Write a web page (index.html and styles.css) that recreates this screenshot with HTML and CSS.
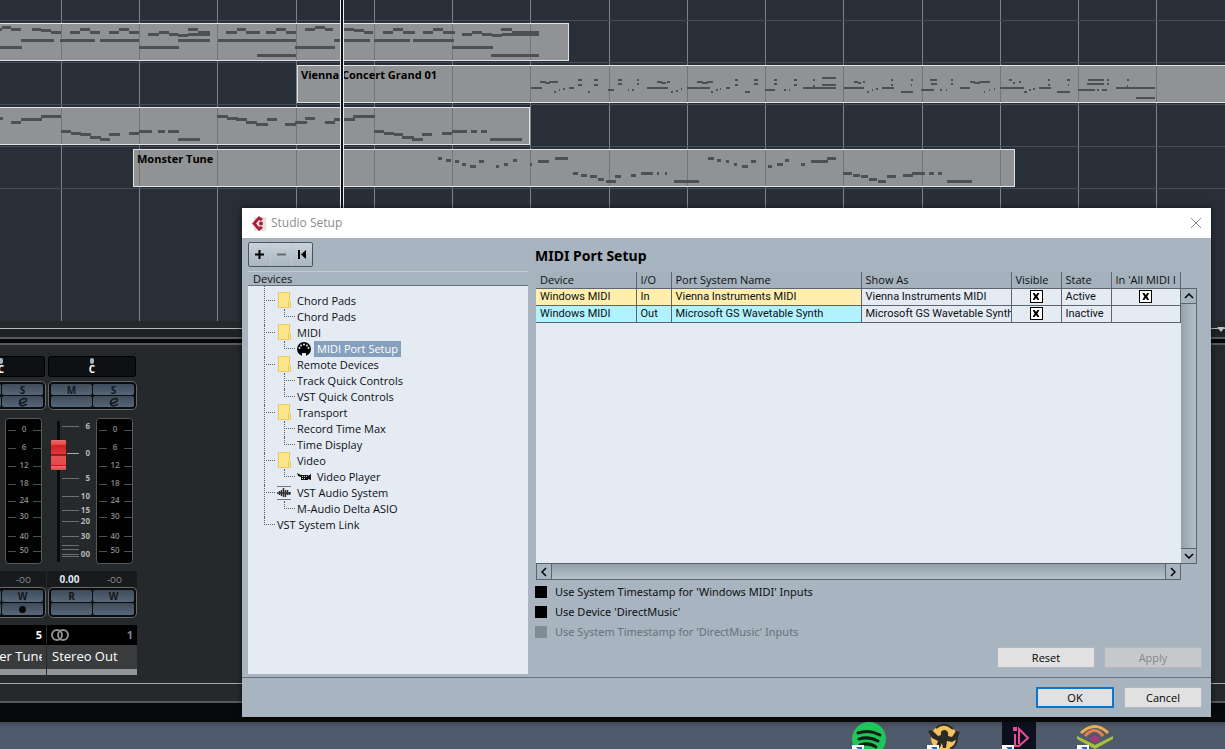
FILE: index.html
```html
<!DOCTYPE html>
<html lang="en">
<head>
  <meta charset="UTF-8" />
  <meta name="viewport" content="width=device-width, initial-scale=1.0" />
  <title>Studio Setup</title>
  <link rel="stylesheet" href="styles.css">
</head>
<body>
  <!-- shared shapes -->
  <svg class="defs" aria-hidden="true">
    <symbol id="bars" viewBox="0 0 1225 400">
      <path d="M61.5 0v400M139.5 0v400M217.5 0v400M296.5 0v400M374.5 0v400M452.5 0v400M530.5 0v400M609.5 0v400M687.5 0v400M765.5 0v400M843.5 0v400M922.5 0v400M1000.5 0v400M1078.5 0v400M1156.5 0v400" stroke="currentColor" fill="none" />
    </symbol>
    <symbol id="folder" viewBox="0 0 14 16">
      <path d="M1.5.5h11v9l1 1v5h-12z" fill="#fde68a" stroke="#e9c75a" />
      <path d="M11.5 15v-5h1" fill="none" stroke="#e9c75a" />
    </symbol>
    <symbol id="edit" viewBox="0 0 12 10">
      <path d="M2 6.500C5 6.500 9.500 5 9.500 3C9.500 1.200 7 1 5 2.200C2.500 3.600 1.800 6 3 7.800C4.300 9.300 7.500 9 9.800 7" fill="none" stroke="#101418" stroke-width="1.500" />
    </symbol>
    <symbol id="shortcut" viewBox="0 0 12 12">
      <path d="M0 0h12v12H0z" fill="#fff" />
      <path d="M4 2h6v6L8 6 4 11 2 9l4-5z" fill="#2b5fb4" />
    </symbol>
  </svg>

  <section class="arranger">
    <svg class="grid" width="1225" height="400"><use href="#bars" /></svg>
    <div class="lane lane-top"></div>
    <div class="lane">
      <div class="clip clip-a">
        <svg class="notes" width="1225" height="36" viewBox="0 24 1225 36">
          <use class="bar-lines" href="#bars" width="1225" height="400" />
          <path transform="translate(0 .5)" d="M2 27h9M0 29h2M11 29h10M32 29h9M41 30h10M51 32h10M70 32h10M80 29h10M90 32h10M109 32h10M119 29h10M129 32h10M148 34h11M159 32h10M169 34h9M178 35h10M188 29h10M188 34h22M198 32h12M226 32h11M237 29h9M246 32h14M266 32h10M276 29h10M286 32h10M305 29h10M315 27h10M325 29h8M344 29h10M354 30h10M364 32h9M383 32h10M393 29h10M403 32h12M423 32h10M433 29h10M443 32h12M462 34h10M472 32h10M482 34h10M492 35h10M501 29h11M502 34h37M512 32h27M21 40h33M60 40h35M100 40h39M178 40h32M218 40h78M334 40h36M374 40h36M413 40h41M0 47h22M139 47h40M295 47h40M452 47h41M257 55h39M491 55h48" />
        </svg>
      </div>
    </div>
    <div class="lane">
      <div class="clip clip-b">
        <svg class="notes thin" width="928" height="36" viewBox="298 66 928 36">
          <use class="bar-lines" href="#bars" width="1225" height="400" />
          <path d="M531 88h11M540 82h6M545 83h5M549 82h9M554 92h2M559 90h1M563 89h2M569 88h5M578 80h4M578 85h4M588 92h2M594 80h4M594 85h4M608 90h6M618 80h4M618 84h4M628 90h1M632 90h2M637 80h2M637 84h2M647 88h21M657 82h5M661 83h5M667 82h3M671 92h2M676 91h2M681 89h1M687 88h23M697 82h6M702 83h6M707 82h6M711 92h2M716 90h2M720 89h1M726 88h4M735 80h3M735 85h3M745 92h5M754 80h4M754 84h4M765 90h10M774 80h3M774 84h3M784 90h2M789 90h1M794 80h3M794 85h3M803 88h33M813 80h2M813 86h2M822 78h14M822 85h14M844 88h20M854 82h4M858 83h3M863 82h2M867 92h2M872 90h1M876 89h2M882 88h12M891 80h2M891 85h2M901 92h12M911 80h2M911 85h1M921 90h13M930 80h7M931 84h6M940 90h2M946 90h1M951 80h2M951 84h2M960 88h10M970 82h5M974 83h6M979 82h11M984 92h1M989 90h1M994 89h1M1000 88h24M1009 80h3M1013 83h2M1019 82h2M1024 92h3M1029 90h2M1033 89h2M1039 88h12M1048 80h2M1048 85h2M1057 92h13M1067 80h3M1068 85h1M1078 90h17M1088 80h16M1087 84h17M1097 90h2M1102 90h5M1107 80h2M1107 84h2M1116 88h39M1127 80h2M1127 86h1M1136 98h19" />
        </svg>
        <span class="clip-name">Vienna Concert Grand 01</span>
      </div>
    </div>
    <div class="lane">
      <div class="clip clip-c">
        <svg class="notes" width="1225" height="36" viewBox="0 108 1225 36">
          <use class="bar-lines" href="#bars" width="1225" height="400" />
          <path transform="translate(0 .5)" d="M0 118h3M11 122h10M21 119h21M41 116h20M61 131h10M71 133h10M80 134h11M90 137h11M100 139h10M109 134h11M129 133h10M139 131h13M158 131h7M168 131h11M178 139h22M217 116h11M227 118h11M236 119h11M246 122h11M256 124h12M267 119h10M285 124h11M295 122h12M305 118h10M325 122h10M334 119h21M353 116h22M374 131h10M384 133h10M394 134h9M402 137h12M412 139h11M422 134h10M442 133h10M452 131h15M471 131h6M481 131h6M490 139h32" />
        </svg>
      </div>
    </div>
    <div class="lane">
      <div class="clip clip-d">
        <svg class="notes" width="1225" height="36" viewBox="134 150 1225 36">
          <use class="bar-lines" href="#bars" width="1225" height="400" />
          <path transform="translate(0 .5)" d="M438 158h4M446 160h5M455 161h4M462 164h4M470 166h6M479 161h5M496 166h3M504 164h4M513 160h4M530 164h2M538 161h11M555 158h13M573 173h5M581 175h6M590 176h7M598 179h6M606 181h10M615 176h6M631 175h5M641 173h12M657 173h2M665 173h2M674 181h25M708 158h6M717 160h4M726 161h3M734 164h3M742 166h6M751 161h5M768 166h4M777 164h6M785 160h4M801 164h4M811 161h17M827 158h9M843 173h9M853 175h7M861 176h7M869 179h8M878 181h8M887 176h9M903 175h10M912 173h13M929 173h5M938 173h4M947 181h25" />
        </svg>
        <span class="clip-name">Monster Tune</span>
      </div>
    </div>
    <div class="lane"></div>
    <div class="playhead"></div>
  </section>

  <div class="arranger-edge"><svg width="8" height="5"><path d="M0 0h8L4 5z" fill="#b9bdc1" /></svg></div>
  <div class="divider"></div>

  <section class="mixer">
    <div class="strip">
      <div class="pan"><i></i>C</div>
      <div class="btn-grid">
        <button aria-label="Mute"></button><button>S</button>
        <button aria-label="Inserts"></button><button aria-label="Edit"><svg width="12" height="10"><use href="#edit" /></svg></button>
      </div>
      <svg class="fader" width="90" height="147" viewBox="0 0 90 147">
        <rect class="meter" x="49.500" y=".5" width="36" height="145" rx="3" />
        <path class="meter-ticks" d="M52 12.500h8M77 12.500h8M52 30.500h8M77 30.500h8M52 48.500h8M77 48.500h8M52 66.500h8M77 66.500h8M52 83.500h8M77 83.500h8M52 99.500h8M77 99.500h8M52 118.500h8M77 118.500h8M52 133.500h8M77 133.500h8" />
        <g class="meter-text">
          <text x="68" y="14">0</text><text x="68" y="32">6</text><text x="68" y="50">12</text><text x="68" y="68">18</text><text x="68" y="85">24</text><text x="68" y="101">30</text><text x="68" y="121">40</text><text x="68" y="135">50</text>
        </g>
      </svg>
      <div class="readout"><b></b><span>-oo</span></div>
      <div class="btn-grid auto">
        <button aria-label="Read"></button><button>W</button>
        <button aria-label="Monitor"></button><button aria-label="Record"><i class="rec"></i></button>
      </div>
      <div class="number"><span></span><b class="on">5</b></div>
      <div class="name"><span>Monster Tune</span></div>
      <div class="color"></div>
    </div>

    <div class="strip">
      <div class="pan"><i></i>C</div>
      <div class="btn-grid">
        <button>M</button><button>S</button>
        <button aria-label="Inserts"></button><button aria-label="Edit"><svg width="12" height="10"><use href="#edit" /></svg></button>
      </div>
      <svg class="fader" width="90" height="147" viewBox="0 0 90 147">
        <defs>
          <linearGradient id="cap" x1="0" y1="0" x2="0" y2="1">
            <stop offset="0" stop-color="#f06a6a" /><stop offset=".15" stop-color="#e24a4a" /><stop offset=".16" stop-color="#d01f24" />
            <stop offset=".46" stop-color="#e0383a" /><stop offset=".5" stop-color="#4a0a0c" /><stop offset=".54" stop-color="#e85052" />
            <stop offset=".82" stop-color="#e4494b" /><stop offset=".85" stop-color="#b02024" /><stop offset=".88" stop-color="#ee6a6c" /><stop offset="1" stop-color="#d84548" />
          </linearGradient>
        </defs>
        <path d="M11.500 3v141" stroke="#0a0b0c" stroke-width="3" />
        <path class="scale" d="M15 8.500h17M15 60.500h17M15 78.500h17M15 92.500h17M15 103.500h17M15 118.500h17M15 127.500h17M15 131.500h17M15 136.500h17M15 138.500h17" />
        <path d="M20 35.500h12" stroke="#a9abad" />
        <g class="scale-text">
          <text x="43" y="11">6</text><text x="43" y="38">0</text><text x="43" y="63">5</text><text x="43" y="81">10</text><text x="43" y="95">15</text><text x="43" y="106">20</text><text x="43" y="121">30</text><text x="43" y="139">00</text>
        </g>
        <rect x="4" y="22" width="15" height="30" rx="1" fill="url(#cap)" />
        <rect class="meter" x="49.500" y=".5" width="36" height="145" rx="3" />
        <path class="meter-ticks" d="M52 12.500h8M77 12.500h8M52 30.500h8M77 30.500h8M52 48.500h8M77 48.500h8M52 66.500h8M77 66.500h8M52 83.500h8M77 83.500h8M52 99.500h8M77 99.500h8M52 118.500h8M77 118.500h8M52 133.500h8M77 133.500h8" />
        <g class="meter-text">
          <text x="68" y="14">0</text><text x="68" y="32">6</text><text x="68" y="50">12</text><text x="68" y="68">18</text><text x="68" y="85">24</text><text x="68" y="101">30</text><text x="68" y="121">40</text><text x="68" y="135">50</text>
        </g>
      </svg>
      <div class="readout"><b>0.00</b><span>-oo</span></div>
      <div class="btn-grid auto">
        <button>R</button><button>W</button>
        <button aria-label="Monitor"></button><button aria-label="Record"></button>
      </div>
      <div class="number">
        <svg width="20" height="14"><g fill="none" stroke="#8d8f91" stroke-width="2"><circle cx="7" cy="7" r="5" /><circle cx="13" cy="7" r="5" /></g></svg>
        <b>1</b>
      </div>
      <div class="name"><span>Stereo Out</span></div>
      <div class="color"></div>
    </div>
  </section>

  <div class="status"></div>
  <div class="black-bar"></div>

  <footer class="desktop">
    <div class="app">
      <svg width="34" height="34"><circle cx="17" cy="17" r="17" fill="#1fc65b" /><path d="M6 11q11-4 22 2M7 17q10-3 19 2M8 23q9-3 16 2" fill="none" stroke="#0b1f12" stroke-width="3" stroke-linecap="round" /></svg>
      <svg class="shortcut" width="12" height="12"><use href="#shortcut" /></svg>
    </div>
    <div class="app">
      <svg width="34" height="34">
        <circle cx="17" cy="16" r="13" fill="#f3c25e" />
        <path d="M9 6q8-7 17 1M30 16q0 8-7 11" fill="none" stroke="#2c2a28" stroke-width="2" />
        <path d="M1 9q3-2 6 1l4 4 3-1q-1-5 4-5 4 1 3 6l4 1 4-6 4 1-3 7-5 3-5-1-1 7h-3l-1-5-3 6H8l3-8-6-3z" fill="#2c2a28" />
      </svg>
      <svg class="shortcut" width="12" height="12"><use href="#shortcut" /></svg>
    </div>
    <div class="app">
      <svg width="34" height="34"><path d="M0 0h34v34H0z" fill="#0c101c" /><path d="M13 12v12h4l9-8-9-9v15" fill="none" stroke="#ec4a94" stroke-width="2" /><path d="M11 5h4v4h-4z" fill="#ec4a94" /></svg>
      <svg class="shortcut" width="12" height="12"><use href="#shortcut" /></svg>
    </div>
    <div class="app">
      <svg width="36" height="34"><path d="M0 14l18 9 18-9v3L18 27 0 17z" fill="#a9c03c" /><path d="M4 11Q18-2 31 11" fill="none" stroke="#e9b24c" stroke-width="3" /><path d="M8 14Q18 3 26 14" fill="none" stroke="#ec7f4e" stroke-width="3" /><path d="M12 17q6-7 11 1l-5 3z" fill="#a23a78" /></svg>
      <svg class="shortcut" width="12" height="12"><use href="#shortcut" /></svg>
    </div>
  </footer>

  <div class="dialog" role="dialog" aria-labelledby="dialog-title">
    <header class="titlebar">
      <svg width="14" height="15"><path d="M2 1h12v14H2z" fill="#e6e2e2" /><path d="M7 0l4 3-2 2-2-1-3 3.500 3 3.500 2-1 2 2-4 3-7-7.500z" fill="#b01c38" /><circle cx="9" cy="7.500" r="2" fill="#b01c38" /></svg>
      <span id="dialog-title">Studio Setup</span>
      <button class="close" aria-label="Close"><svg width="12" height="12"><path d="M1 1l10 10M11 1L1 11" stroke="#8a8a8a" /></svg></button>
    </header>

    <div class="panes">
      <aside class="devices">
        <div class="toolbar">
          <button aria-label="Add"><svg width="9" height="9"><path d="M4.500 0v9M0 4.500h9" stroke="#000" stroke-width="2" /></svg></button>
          <button aria-label="Remove"><svg width="9" height="9"><path d="M0 4.500h9" stroke="#666b70" stroke-width="2" /></svg></button>
          <button aria-label="Reset device"><svg width="9" height="9"><path d="M1 0v9" stroke="#000" stroke-width="2" /><path d="M8 0v9L3 4.500z" /></svg></button>
        </div>
        <h3>Devices</h3>
        <div class="tree-box">
          <ul class="tree">
            <li><div class="item"><svg class="folder" width="14" height="16"><use href="#folder" /></svg>Chord Pads</div>
              <ul><li><div class="item">Chord Pads</div></li></ul>
            </li>
            <li><div class="item"><svg class="folder" width="14" height="16"><use href="#folder" /></svg>MIDI</div>
              <ul><li><div class="item"><svg width="14" height="14"><circle cx="7" cy="7" r="7" /><path d="M5 11h4v3H5z" fill="#e4ebf3" /><g fill="#e4ebf3"><circle cx="2.500" cy="6" r="1" /><circle cx="4" cy="3.500" r="1" /><circle cx="7" cy="2.500" r="1" /><circle cx="10" cy="3.500" r="1" /><circle cx="11.500" cy="6" r="1" /></g></svg><span class="selected">MIDI Port Setup</span></div></li></ul>
            </li>
            <li><div class="item"><svg class="folder" width="14" height="16"><use href="#folder" /></svg>Remote Devices</div>
              <ul><li><div class="item">Track Quick Controls</div></li><li><div class="item">VST Quick Controls</div></li></ul>
            </li>
            <li><div class="item"><svg class="folder" width="14" height="16"><use href="#folder" /></svg>Transport</div>
              <ul><li><div class="item">Record Time Max</div></li><li><div class="item">Time Display</div></li></ul>
            </li>
            <li><div class="item"><svg class="folder" width="14" height="16"><use href="#folder" /></svg>Video</div>
              <ul><li><div class="item"><svg width="14" height="8"><path d="M0 0l4 2h7v1l3-2v6l-3-1v1H4V4L1 3z" fill="#111" /><path d="M5 3.500h5M5 5.500h4" stroke="#cfd6dd" stroke-dasharray="1 1" /></svg>Video Player</div></li></ul>
            </li>
            <li><div class="item"><svg width="14" height="14"><path d="M0 .5h14M0 13.500h14" stroke="#777" /><path d="M0 7h14M2.500 5v4M4.500 4v6M6.500 2v9M8.500 4v7M10.500 4v5M12.500 6v3" stroke="#333" stroke-width="1.500" /></svg>VST Audio System</div>
              <ul><li><div class="item">M-Audio Delta ASIO</div></li></ul>
            </li>
            <li><div class="item">VST System Link</div></li>
          </ul>
        </div>
      </aside>

      <main class="setup">
        <h2>MIDI Port Setup</h2>
        <div class="ports">
          <div class="ports-table">
            <table>
              <colgroup><col class="c-device"><col class="c-io"><col class="c-port"><col class="c-show"><col class="c-flag"><col class="c-flag"><col></colgroup>
              <thead>
                <tr><th>Device</th><th>I/O</th><th>Port System Name</th><th>Show As</th><th>Visible</th><th>State</th><th>In 'All MIDI I</th></tr>
              </thead>
              <tbody>
                <tr class="in"><td>Windows MIDI</td><td>In</td><td>Vienna Instruments MIDI</td><td>Vienna Instruments MIDI</td><td class="check"><input type="checkbox" aria-label="Visible" checked></td><td>Active</td><td class="check"><input type="checkbox" aria-label="In All MIDI Inputs" checked></td></tr>
                <tr class="out"><td>Windows MIDI</td><td>Out</td><td>Microsoft GS Wavetable Synth</td><td>Microsoft GS Wavetable Synth</td><td class="check"><input type="checkbox" aria-label="Visible" checked></td><td>Inactive</td><td></td></tr>
              </tbody>
            </table>
          </div>
          <div class="scroll-v">
            <button aria-label="Scroll up"><svg width="10" height="6"><path d="M1 5l4-4 4 4" /></svg></button>
            <button aria-label="Scroll down"><svg width="10" height="6"><path d="M1 1l4 4 4-4" /></svg></button>
          </div>
          <div class="scroll-h">
            <button aria-label="Scroll left"><svg width="6" height="10"><path d="M5 1L1 5l4 4" /></svg></button>
            <button aria-label="Scroll right"><svg width="6" height="10"><path d="M1 1l4 4-4 4" /></svg></button>
          </div>
        </div>
        <div class="options">
          <label><input type="checkbox"> Use System Timestamp for 'Windows MIDI' Inputs</label>
          <label><input type="checkbox"> Use Device 'DirectMusic'</label>
          <label class="off"><input type="checkbox" disabled> Use System Timestamp for 'DirectMusic' Inputs</label>
        </div>
        <div class="actions">
          <button class="btn wide">Reset</button>
          <button class="btn wide" disabled>Apply</button>
        </div>
      </main>
    </div>

    <div class="dialog-footer">
      <button class="btn primary">OK</button>
      <button class="btn">Cancel</button>
    </div>
  </div>
</body>
</html>
```
FILE: styles.css
```css
* {
  box-sizing: border-box;
}
body {
  margin: 0;
  position: relative;
  min-height: 100vh;
  display: flex;
  flex-direction: column;
  overflow: hidden;
  font-family: "Open Sans", "Noto Sans", sans-serif;
  font-size: 11px;
  line-height: 16px;
  color: #0c1014;
  background: #25292b;
}
button {
  font: inherit;
  color: inherit;
  padding: 0;
  border: 0;
  background: none;
}
svg {
  display: block;
  flex: none;
}
.defs {
  position: absolute;
  width: 0;
  height: 0;
}

/* arranger */
.arranger {
  position: relative;
  height: 321px;
  overflow: hidden;
  background: #282f38;
}
.grid {
  position: absolute;
  top: 0;
  left: 0;
  color: #7d848b;
}
.lane {
  position: relative;
  height: 42px;
  padding-top: 2px;
  border-top: 1px solid #474e56;
}
.lane-top {
  height: 20px;
  border: 0;
}
.clip {
  position: relative;
  height: 38px;
  border: 1px solid #dfe1e2;
  background: #919293;
  overflow: hidden;
}
.clip-a {
  width: 570px;
  margin-left: -1px;
}
.clip-b {
  margin-left: 297px;
  border-right: 0;
}
.clip-c {
  width: 531px;
  margin-left: -1px;
}
.clip-d {
  width: 882px;
  margin-left: 133px;
}
.clip-name {
  position: absolute;
  top: 1px;
  left: 3px;
  font-weight: 700;
  color: #000;
}
.notes path {
  stroke: #4f5051;
  stroke-width: 3;
  fill: none;
}
.notes.thin path {
  stroke-width: 2;
}
.bar-lines {
  color: #747576;
}
#bars path {
  stroke: currentColor;
  stroke-width: 1;
}
.playhead {
  position: absolute;
  top: 0;
  bottom: 0;
  left: 340px;
  width: 4px;
  background: #0d1016;
  border: solid #e8eaec;
  border-width: 0 1px;
}
.arranger-edge {
  height: 16px;
  padding: 6px 0 0;
  display: flex;
  justify-content: flex-end;
  background: linear-gradient(#26292b 7px, #b4b6b8 7px, #b4b6b8 8px, #1f2224 8px);
}
.divider {
  height: 8px;
  background: #050607;
  border: solid #58595b;
  border-width: 2px 0;
}

/* mixer */
.mixer {
  display: flex;
  gap: 1px;
  height: 338px;
  margin-left: -44px;
  padding-top: 11px;
}
.strip {
  width: 90px;
  flex: none;
  display: flex;
  flex-direction: column;
}
.pan {
  height: 21px;
  margin: 0 1px 4px;
  padding-top: 7px;
  border: 1px solid #000;
  border-radius: 3px;
  background: #0e1011;
  color: #fff;
  font-size: 10px;
  line-height: 10px;
  font-weight: 700;
  text-align: center;
  position: relative;
}
.pan i {
  position: absolute;
  top: 1px;
  left: 41px;
  width: 4px;
  height: 6px;
  border-radius: 2px;
  background: #9fb6ca;
}
.btn-grid {
  height: 29px;
  margin: 0 0 8px 1px;
  padding: 2px;
  display: grid;
  grid-template: 1fr 1fr / 1fr 1fr;
  gap: 1px;
  border: 1px solid #66686a;
  border-radius: 5px;
  background: #0a0c0e;
}
.btn-grid button {
  display: flex;
  align-items: center;
  justify-content: center;
  border-radius: 2px;
  background: linear-gradient(#3f4b59, #56677a);
  color: #14181c;
  font-size: 10px;
  line-height: 10px;
  font-weight: 700;
}
.btn-grid.auto {
  height: 31px;
  margin-bottom: 7px;
}
.rec {
  width: 7px;
  height: 7px;
  border-radius: 50%;
  background: #06080a;
}
.fader {
  margin-bottom: 6px;
}
.meter {
  fill: #020202;
  stroke: #57595b;
}
.meter-ticks,
.scale {
  fill: none;
  stroke: #4c4e50;
}
.scale {
  stroke: #6d6f71;
}
.meter-text text,
.scale-text text {
  font-size: 8px;
  font-weight: 600;
  fill: #85888a;
  text-anchor: middle;
}
.scale-text text {
  font-weight: 700;
  fill: #b4b6b8;
  text-anchor: end;
}
.readout {
  height: 16px;
  display: grid;
  grid-template-columns: 1fr 1fr;
  text-align: center;
  font-size: 10px;
  background: #181a1c;
  color: #85888a;
}
.readout b {
  color: #dce6f0;
}
.number {
  height: 20px;
  padding: 0 4px 0 3px;
  display: flex;
  align-items: center;
  justify-content: space-between;
  background: #000;
  color: #85888a;
}
.number .on {
  color: #fff;
}
.name {
  height: 24px;
  padding: 0 4px 0 5px;
  line-height: 23px;
  font-size: 13px;
  color: #fff;
  background: #3a3b3d;
}
.name span {
  display: block;
  overflow: hidden;
  white-space: nowrap;
}
.color {
  height: 6px;
  background: #929496;
}
.status {
  height: 20px;
  border-top: 1px solid #a6a8aa;
  border-bottom: 2px solid #58595b;
}
.black-bar {
  height: 19px;
  background: #08090a;
}

/* desktop */
.desktop {
  flex: 1;
  height: 27px;
  padding-right: 112px;
  display: flex;
  justify-content: flex-end;
  gap: 41px;
  overflow: hidden;
  background: linear-gradient(#434a56, #4f5b6a 6px);
}
.app {
  position: relative;
}
.shortcut {
  position: absolute;
  top: 23px;
  left: 0;
}

/* dialog */
.dialog {
  position: absolute;
  top: 208px;
  left: 242px;
  right: 14px;
  background: #a8b4bf;
  box-shadow: 0 0 6px rgba(0,0,0,0.6);
}
.titlebar {
  height: 30px;
  padding: 0 9px 0 10px;
  display: flex;
  align-items: center;
  gap: 5px;
  background: #fff;
  color: #8c8c8c;
  font-size: 12px;
}
.close {
  margin-left: auto;
}
.panes {
  display: flex;
  gap: 7px;
  padding: 4px 9px 3px 6px;
  border-bottom: 1px solid #66727f;
}
.devices {
  width: 280px;
  display: flex;
  flex-direction: column;
}
.toolbar {
  height: 25px;
  align-self: flex-start;
  display: flex;
  margin-bottom: 4px;
  border: 1px solid #4a5561;
  border-radius: 2px;
  background: linear-gradient(#c9d2da, #a9b5c0);
}
.toolbar button {
  width: 21px;
  display: flex;
  align-items: center;
  justify-content: center;
}
.toolbar button + button {
  border-left: 1px solid #bcc6cf;
}
h3 {
  height: 15px;
  margin: 0;
  padding-left: 5px;
  border-top: 1px solid #c3ccd5;
  border-bottom: 1px solid #66727f;
  font-size: 11px;
  line-height: 14px;
  font-weight: 400;
}
.tree-box {
  flex: 1;
  padding: 7px 16px;
  background: #e4ebf3;
}
.tree,
.tree ul {
  margin: 0;
  padding: 0;
  list-style: none;
}
.tree ul {
  margin-left: 7px;
}
.tree li {
  position: relative;
  padding-left: 13px;
}
.tree li::before {
  content: "";
  position: absolute;
  top: 0;
  bottom: 0;
  left: 0;
  border-left: 1px dotted #59626b;
}
.tree > li:first-child::before {
  top: -7px;
}
.tree li:last-child::before {
  bottom: auto;
  height: 8px;
}
.tree li::after {
  content: "";
  position: absolute;
  top: 7px;
  left: 0;
  width: 11px;
  border-top: 1px dotted #59626b;
}
.item {
  height: 16px;
  display: flex;
  align-items: center;
  gap: 6px;
}
.folder {
  margin-top: -2px;
}
.selected {
  margin-left: -3px;
  padding: 0 3px;
  background: #84a0bd;
  color: #fff;
}
.setup {
  flex: 1;
}
h2 {
  margin: 4px 0 6px;
  font-family: "Noto Sans", sans-serif;
  font-size: 14px;
  line-height: 20px;
  color: #000;
}
.ports {
  display: grid;
  grid-template: 292px 16px / 1fr 16px;
  margin: 0 5px 0 1px;
}
.ports-table {
  background: #e4ebf3;
  border-bottom: 1px solid #56616c;
}
table {
  width: 100%;
  table-layout: fixed;
  border-collapse: collapse;
}
th,
td {
  height: 17px;
  padding: 0 0 0 4px;
  overflow: hidden;
  white-space: nowrap;
  text-align: left;
  font-weight: 400;
  border: solid #5a6570;
  border-width: 0 1px 1px 0;
}
th {
  height: 16px;
  line-height: 15px;
  background: #a5b1bc;
}
td {
  font-family: Roboto, sans-serif;
  line-height: 16px;
}
.c-device {
  width: 100px;
}
.c-io {
  width: 35px;
}
.c-port {
  width: 190px;
}
.c-show {
  width: 150px;
}
.c-flag {
  width: 50px;
}
.in td:nth-child(-n+3) {
  background: #ffeead;
}
.out td:nth-child(-n+3) {
  background: #b0f2fd;
}
td.check {
  padding: 0;
  text-align: center;
}
.check input {
  appearance: none;
  display: block;
  width: 13px;
  height: 13px;
  margin: 0 auto;
  border: 1px solid #000;
  background: #fff;
}
.check input:checked::before {
  content: "";
  display: block;
  width: 7px;
  height: 7px;
  margin: 2px;
  background: #000;
  clip-path: polygon(0 0, 30% 0, 50% 28%, 70% 0, 100% 0, 70% 50%, 100% 100%, 70% 100%, 50% 72%, 30% 100%, 0 100%, 30% 50%);
}
.scroll-v,
.scroll-h {
  display: flex;
  justify-content: space-between;
  border: 1px solid #5a6570;
}
.scroll-v {
  flex-direction: column;
  margin-top: 16px;
  border-left: 0;
  background: linear-gradient(90deg, #95a0aa, #b4c0ca);
}
.scroll-h {
  border-top: 0;
  background: linear-gradient(#95a0aa, #b4c0ca);
}
.scroll-v button,
.scroll-h button {
  width: 15px;
  height: 15px;
  display: flex;
  align-items: center;
  justify-content: center;
  background: #a8b4bf;
}
.scroll-v button:first-child {
  border-bottom: 1px solid #5a6570;
}
.scroll-v button:last-child {
  border-top: 1px solid #5a6570;
}
.scroll-h button:first-child {
  border-right: 1px solid #5a6570;
}
.scroll-h button:last-child {
  border-left: 1px solid #5a6570;
}
.scroll-v path,
.scroll-h path {
  fill: none;
  stroke: #000;
  stroke-width: 1.5;
}
.options {
  padding-top: 2px;
  font-family: "Noto Sans", sans-serif;
}
.options label {
  height: 20px;
  display: flex;
  align-items: center;
  gap: 8px;
}
.options input {
  appearance: none;
  width: 12px;
  height: 12px;
  margin: 0;
  background: #000;
}
.options .off {
  color: #66727d;
}
.off input {
  background: #808b95;
}
.actions {
  display: flex;
  justify-content: flex-end;
  gap: 9px;
  padding: 5px 0 6px;
}
.btn {
  width: 78px;
  height: 21px;
  border: 1px solid #b4b8bc;
  background: #e1e1e1;
  color: #000;
}
.btn.wide {
  width: 98px;
}
.btn:disabled {
  background: #c6c8ca;
  color: #84888c;
}
.btn.primary {
  border: 2px solid #0f74cc;
}
.dialog-footer {
  height: 39px;
  padding-right: 9px;
  display: flex;
  align-items: center;
  justify-content: flex-end;
  gap: 10px;
}
```
